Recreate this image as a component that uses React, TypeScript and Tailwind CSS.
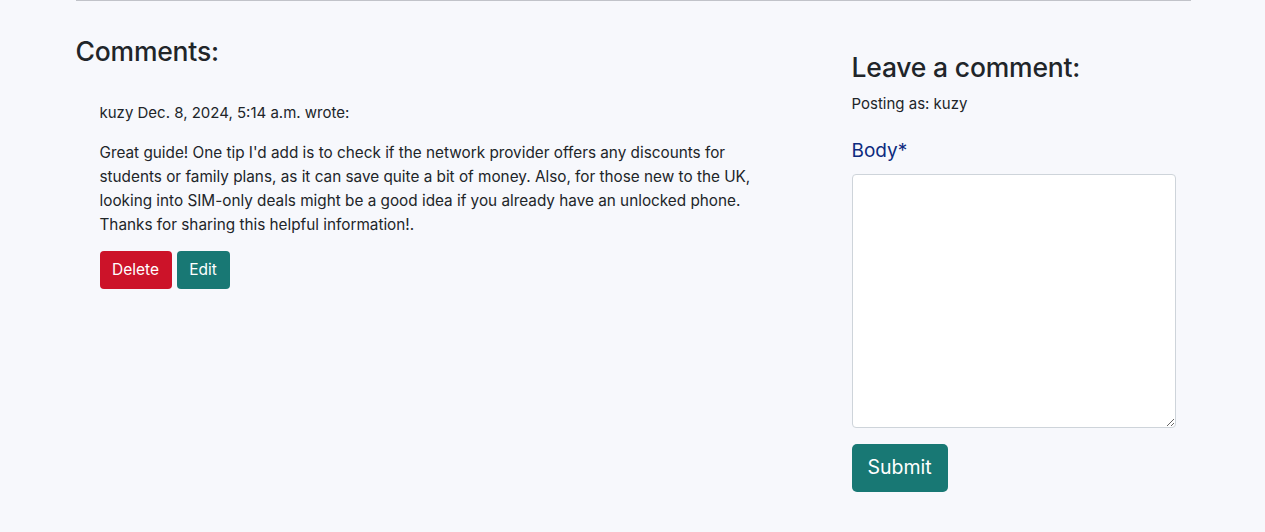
import React from "react";

export default function App() {
  return (
    <div
      className="min-h-[532px] w-full bg-[#f7f8fc] text-[#212529]"
      style={{ fontFamily: "Inter, 'Noto Sans', sans-serif" }}
    >
      <div className="mx-auto w-[1116px] pl-[1px]">
        <div className="h-[1px] w-[1115px] bg-[#c1c3c9]" />
        <div className="flex">
          <div className="w-[776px] shrink-0">
            <h3 className="mt-[34px] text-[26.5px] font-medium leading-[32px] tracking-[-0.2px]">Comments:</h3>
            <div className="pl-[24px] pt-[34px]">
              <p className="text-[15px] leading-[24px]">kuzy Dec. 8, 2024, 5:14 a.m. wrote:</p>
              <p className="mt-[16px] text-[15.3px] leading-[24px]">
                Great guide! One tip I'd add is to check if the network provider offers any discounts for
                <br />
                students or family plans, as it can save quite a bit of money. Also, for those new to the UK,
                <br />
                looking into SIM-only deals might be a good idea if you already have an unlocked phone.
                <br />
                Thanks for sharing this helpful information!.
              </p>
              <div className="mt-[14px] flex gap-[5px]">
                <button className="h-[38px] w-[72px] rounded-[4px] bg-[#cc1329] text-[15.5px] text-white">
                  Delete
                </button>
                <button className="h-[38px] w-[53px] rounded-[4px] bg-[#187874] text-[15.5px] text-white">
                  Edit
                </button>
              </div>
            </div>
          </div>
          <div className="w-[324px] shrink-0">
            <h3 className="mt-[50px] text-[26.5px] font-medium leading-[32px] tracking-[-0.2px]">Leave a comment:</h3>
            <p className="mt-[9px] text-[15px] leading-[24px]">Posting as: kuzy</p>
            <label className="mt-[21px] block text-[19px] leading-[28px] text-[#0d2b7e]">Body*</label>
            <textarea className="mt-[9px] block h-[254px] w-[324px] rounded-[4px] border border-[#ced4da] bg-white" />
            <button className="mt-[16px] h-[48px] w-[96px] rounded-[5px] bg-[#187874] text-[19.5px] text-white">
              Submit
            </button>
          </div>
        </div>
      </div>
    </div>
  );
}
